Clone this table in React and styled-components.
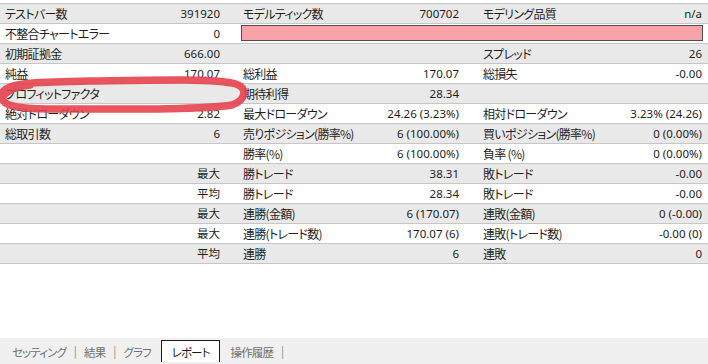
import React from 'react';
import styled, { createGlobalStyle } from 'styled-components';

const GlobalStyle = createGlobalStyle`
  html, body {
    margin: 0;
    padding: 0;
    background: #ffffff;
  }
  body {
    font-family: "Noto Sans CJK JP", "Noto Sans", sans-serif;
    font-feature-settings: "palt" 1;
    color: #1e1e1e;
  }
`;

const Page = styled.div`
  width: 708px;
  height: 364px;
  display: flex;
  flex-direction: column;
  overflow: hidden;
`;

const Table = styled.div`
  position: relative;
  margin-top: 3px;
  border-top: 1px solid #c6c6c6;
`;

const Row = styled.div`
  display: grid;
  grid-template-columns: 238px 240px 1fr;
  height: 19px;
  border-bottom: 1px solid #c6c6c6;
  background: ${p => (p.$alt ? '#e9e9e9' : '#ffffff')};
`;

const Cell = styled.div`
  display: flex;
  align-items: center;
  justify-content: space-between;
  padding: 0 ${p => p.$pr}px 0 5px;
  min-width: 0;
  white-space: nowrap;
`;

const Label = styled.span`
  font-size: 12px;
  line-height: 19px;
  letter-spacing: -0.7px;
`;

const Value = styled.span`
  font-family: "Noto Sans", "Noto Sans CJK JP", sans-serif;
  font-size: 11.5px;
  line-height: 19px;
  margin-left: auto;
`;

const PinkBox = styled.div`
  grid-column: 2 / 4;
  margin: 1px 5px 2px 3px;
  background: #f7a2a6;
  border: 1px solid #4f4f59;
`;

const Scribble = styled.svg`
  position: absolute;
  left: 0;
  top: 66px;
  pointer-events: none;
`;

const Spacer = styled.div`
  flex: 1;
`;

const TabBar = styled.div`
  height: 26px;
  background: #f0f0f0;
  display: flex;
  align-items: flex-end;
  padding-left: 12px;
  font-size: 11.5px;
  letter-spacing: -0.9px;
  color: #707070;
`;

const Tab = styled.div`
  height: 21px;
  display: flex;
  align-items: center;
  margin-bottom: 2px;
  padding: ${p => (p.$active ? '0 9px 0 10px' : '0')};
  background: ${p => (p.$active ? '#ffffff' : 'transparent')};
  border: ${p => (p.$active ? '1px solid #1a1a1a' : 'none')};
  border-bottom: none;
  color: ${p => (p.$active ? '#1a1a1a' : '#707070')};
  margin-right: ${p => (p.$active ? '11px' : '0')};
  margin-left: ${p => (p.$active ? '10px' : '0')};
`;

const Sep = styled.span`
  margin: 0 8px 2px;
  color: #8a8a8a;
  height: 21px;
  line-height: 21px;
`;

const rows = [
  [['テストバー数', '391920'], ['モデルティック数', '700702'], ['モデリング品質', 'n/a']],
  'pink',
  [['初期証拠金', '666.00'], ['', ''], ['スプレッド', '26']],
  [['純益', '170.07'], ['総利益', '170.07'], ['総損失', '-0.00']],
  [['プロフィットファクタ', ''], ['期待利得', '28.34'], ['', '']],
  [['絶対ドローダウン', '2.82'], ['最大ドローダウン', '24.26 (3.23%)'], ['相対ドローダウン', '3.23% (24.26)']],
  [['総取引数', '6'], ['売りポジション(勝率%)', '6 (100.00%)'], ['買いポジション(勝率%)', '0 (0.00%)']],
  [['', ''], ['勝率(%)', '6 (100.00%)'], ['負率 (%)', '0 (0.00%)']],
  [['', '最大'], ['勝トレード', '38.31'], ['敗トレード', '-0.00']],
  [['', '平均'], ['勝トレード', '28.34'], ['敗トレード', '-0.00']],
  [['', '最大'], ['連勝(金額)', '6 (170.07)'], ['連敗(金額)', '0 (-0.00)']],
  [['', '最大'], ['連勝(トレード数)', '170.07 (6)'], ['連敗(トレード数)', '-0.00 (0)']],
  [['', '平均'], ['連勝', '6'], ['連敗', '0']],
];

const pads = [18, 19, 6];

export default function App() {
  return (
    <Page>
      <GlobalStyle />
      <Table>
        {rows.map((row, i) => (
          <Row key={i} $alt={i % 2 === 0}>
            {row === 'pink' ? (
              <>
                <Cell $pr={18}>
                  <Label>不整合チャートエラー</Label>
                  <Value>0</Value>
                </Cell>
                <PinkBox />
              </>
            ) : (
              row.map(([label, value], j) => (
                <Cell key={j} $pr={pads[j]}>
                  {label && <Label>{label}</Label>}
                  {value && <Value>{value}</Value>}
                </Cell>
              ))
            )}
          </Row>
        ))}
        <Scribble width="260" height="50" viewBox="0 0 260 50">
          <path
            d="M 3 22 C 8 12, 40 12, 90 11 C 150 10, 215 8, 236 14 C 248 18, 246 30, 232 35 C 200 40, 120 39, 60 39 C 30 39, 6 38, 3 30 C 1 24, 12 17, 30 15"
            fill="none"
            stroke="#e6424e"
            strokeOpacity="0.9"
            strokeWidth="7.5"
            strokeLinecap="round"
            strokeLinejoin="round"
          />
        </Scribble>
      </Table>
      <Spacer />
      <TabBar>
        <Tab>セッティング</Tab>
        <Sep>|</Sep>
        <Tab>結果</Tab>
        <Sep>|</Sep>
        <Tab>グラフ</Tab>
        <Tab $active>レポート</Tab>
        <Tab>操作履歴</Tab>
        <Sep>|</Sep>
      </TabBar>
    </Page>
  );
}
